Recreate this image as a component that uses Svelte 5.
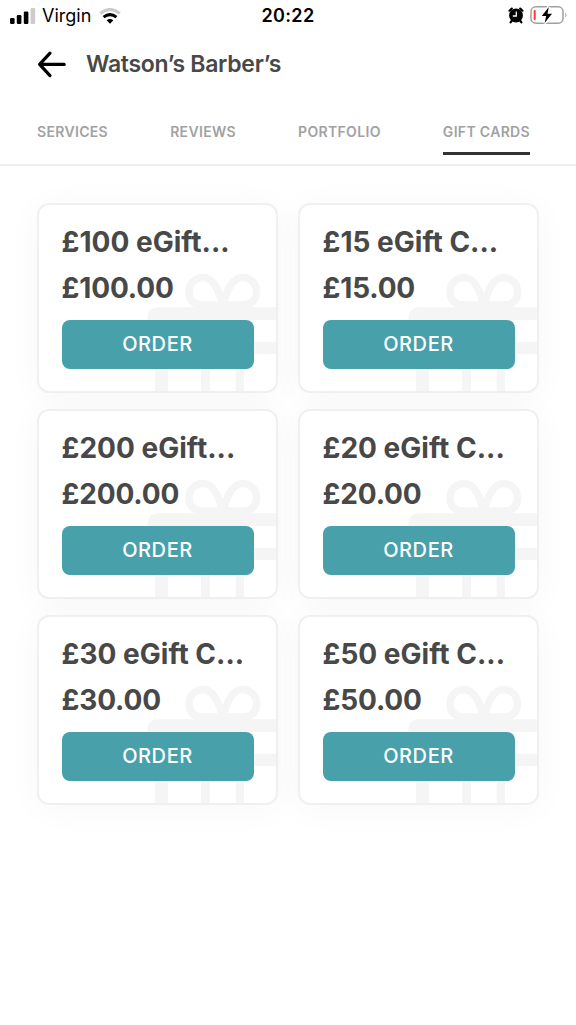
<script lang="ts">
	const tabs = ['Services', 'Reviews', 'Portfolio', 'Gift Cards'];
	let active = $state('Gift Cards');

	const cards: { title: string; price: string }[] = [
		{ title: '£100 eGift...', price: '£100.00' },
		{ title: '£15 eGift C...', price: '£15.00' },
		{ title: '£200 eGift...', price: '£200.00' },
		{ title: '£20 eGift C...', price: '£20.00' },
		{ title: '£30 eGift C...', price: '£30.00' },
		{ title: '£50 eGift C...', price: '£50.00' }
	];
</script>

<div class="screen">
	<div class="status">
		<div class="carrier">
			<svg class="signal" width="26" height="16" viewBox="0 0 26 16">
				<rect x="0" y="10" width="4.600" height="6" rx="1.3" />
				<rect x="6.800" y="7" width="4.600" height="9" rx="1.3" />
				<rect x="13.800" y="3.500" width="4.600" height="12.500" rx="1.3" />
				<rect class="off" x="20.600" y="0" width="4.600" height="16" rx="1.3" />
			</svg>
			<span class="network">Virgin</span>
			<svg class="wifi" width="22" height="17" viewBox="0 0 22 17">
				<path class="wave off" d="M1.200 5.400Q11-2.600 20.800 5.400" />
				<path class="wave" d="M4.600 9.200Q11 4 17.400 9.200" />
				<path d="M7.600 12.300Q11 9.700 14.400 12.300L11 15.800Z" />
			</svg>
		</div>
		<span class="time">20:22</span>
		<div class="power">
			<svg width="16" height="17" viewBox="0 0 16 17">
				<circle cx="8" cy="8.500" r="6.900" />
				<path class="bell" d="M1.500 3.700L3.800 1.600M14.500 3.700L12.200 1.600M3.600 14L2.600 15.300M12.400 14L13.400 15.300" />
				<path class="hand" d="M8.300 4.500V9H4.800" />
			</svg>
			<svg width="38" height="20" viewBox="0 0 38 20">
				<rect class="cell" x="1" y="1.800" width="32" height="16.400" rx="4.800" />
				<path class="cap" d="M35.400 7.200Q37.600 10 35.400 12.800Z" />
				<rect class="low" x="3.700" y="5" width="2" height="10" rx=".7" />
				<path class="bolt-edge" d="M18.800 2L11.800 11H16.200L14.600 18L22 8.700H17.500Z" />
				<path d="M18.800 2L11.800 11H16.200L14.600 18L22 8.700H17.500Z" />
			</svg>
		</div>
	</div>

	<header>
		<button type="button" class="back" aria-label="Back">
			<svg width="30" height="28" viewBox="0 0 30 28">
				<path d="M14 3.200L3.600 14.400L14 25.600M3.800 14.400H28.200" />
			</svg>
		</button>
		<h1>Watson’s Barber’s</h1>
	</header>

	<nav>
		{#each tabs as tab (tab)}
			<button type="button" class="tab" class:active={active === tab} onclick={() => (active = tab)}>
				{tab}
			</button>
		{/each}
	</nav>

	<main>
		{#each cards as card (card.title)}
			<article>
				<svg class="gift" width="237" height="186" viewBox="1 1 237 186" aria-hidden="true">
					<path class="loop" d="M184.800 104C182 87 175 73.500 165.500 73.500C157 73.500 151 79.500 151 88C151 96 156.500 101 164 101H184.800" />
					<path class="loop" d="M184.800 104C187.600 87 194.600 73.500 204.100 73.500C212.600 73.500 218.600 79.500 218.600 88C218.600 96 213.100 101 205.600 101H184.800" />
					<path d="M239 103.300H121Q109.300 103.300 109.300 115V150H239V137.700H122V116H239Z" />
					<path d="M117 150H130V188H117ZM163 150H172V188H163ZM197.700 150H206V188H197.700Z" />
				</svg>
				<h2>{card.title}</h2>
				<p>{card.price}</p>
				<button type="button" class="order">ORDER</button>
			</article>
		{/each}
	</main>
</div>

<style>
	:global(body) {
		background: #fff;
	}

	.screen {
		width: 576px;
		height: 1025px;
		overflow: hidden;
		background: #fff;
		font-family: Inter, 'Liberation Sans', sans-serif;
		color: #484848;
	}

	button {
		margin: 0;
		padding: 0;
		border: 0;
		background: none;
		font-family: inherit;
		cursor: pointer;
	}

	.status {
		display: grid;
		grid-template-columns: 1fr auto 1fr;
		align-items: center;
		height: 32px;
		padding: 0 8px 0 10px;
		box-sizing: border-box;
		color: #000;
	}

	.carrier {
		display: flex;
		align-items: center;
	}

	.network {
		margin: 0 8px 0 6px;
		font-size: 18px;
		line-height: 22px;
		padding-bottom: 1px;
	}

	.off {
		fill: #ccc;
	}

	.wave {
		fill: none;
		stroke: #000;
		stroke-width: 3;
	}

	.wave.off {
		stroke: #ccc;
	}

	.time {
		margin-right: 2px;
		padding-bottom: 1px;
		font-size: 18px;
		font-weight: 600;
		letter-spacing: 0.35px;
	}

	.power {
		display: flex;
		justify-content: flex-end;
		align-items: center;
		gap: 6px;
		padding-bottom: 2px;
	}

	.bell {
		stroke: #000;
		stroke-width: 2.2;
		stroke-linecap: round;
	}

	.hand {
		fill: none;
		stroke: #fff;
		stroke-width: 1.3;
	}

	.cell {
		fill: none;
		stroke: #a0a0a0;
		stroke-width: 1.5;
	}

	.cap {
		fill: #a0a0a0;
	}

	.low {
		fill: #ff3b30;
	}

	.bolt-edge {
		stroke: #fff;
		stroke-width: 3;
	}

	header {
		display: flex;
		align-items: center;
		gap: 20px;
		height: 64px;
		padding-left: 36px;
	}

	.back {
		display: flex;
	}

	.back path {
		fill: none;
		stroke: #000;
		stroke-width: 3.2;
		stroke-linecap: round;
		stroke-linejoin: round;
	}

	h1 {
		margin: 0;
		font-size: 23px;
		font-weight: 600;
		letter-spacing: -0.3px;
	}

	nav {
		display: flex;
		justify-content: space-between;
		height: 70px;
		padding: 14px 46px 0 37px;
		box-sizing: border-box;
		border-bottom: 2px solid #efefef;
	}

	.tab {
		height: 45px;
		box-sizing: border-box;
		border-bottom: 3px solid transparent;
		font-size: 14px;
		font-weight: 600;
		letter-spacing: 0.33px;
		text-transform: uppercase;
		color: #a1a2a4;
	}

	.tab.active {
		border-color: #333;
	}

	main {
		display: grid;
		grid-template-columns: 241px 241px;
		gap: 16px 20px;
		padding: 37px 37px 0;
	}

	article {
		position: relative;
		height: 190px;
		box-sizing: border-box;
		padding: 18px 22.5px 0;
		border: 2px solid #f0f0f0;
		border-radius: 12px;
		background: #fff;
		box-shadow: 0 4px 36px rgba(0, 0, 0, 0.035);
		overflow: hidden;
	}

	.gift {
		position: absolute;
		inset: 0;
		fill: #f5f5f5;
	}

	.loop {
		fill: none;
		stroke: #f5f5f5;
		stroke-width: 7.5;
	}

	h2,
	p {
		position: relative;
		margin: 0;
		font-size: 28px;
		font-weight: 700;
		line-height: 38px;
		white-space: nowrap;
	}

	h2 {
		letter-spacing: 0.02px;
	}

	p {
		margin-top: 8px;
		letter-spacing: -0.15px;
	}

	.order {
		position: relative;
		width: 192px;
		height: 49px;
		margin-top: 12.5px;
		border-radius: 8px;
		background: #48a0ab;
		color: #fff;
		font-size: 20px;
		font-weight: 500;
		letter-spacing: 0.6px;
	}
</style>
